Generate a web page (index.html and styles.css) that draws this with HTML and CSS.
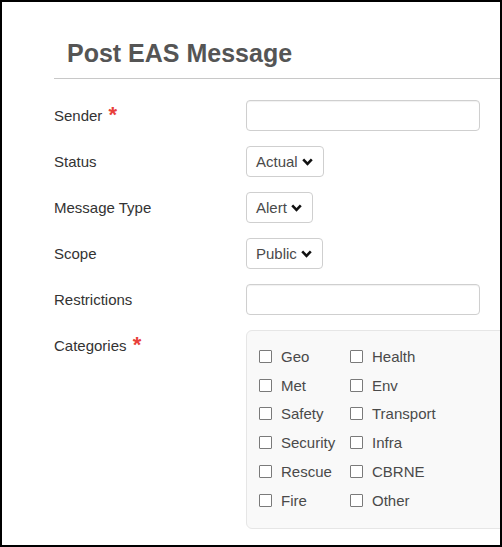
FILE: index.html
```html
<!DOCTYPE html>
<html lang="en">
<head>
<meta charset="utf-8">
<title>Post EAS Message</title>
<link rel="stylesheet" href="styles.css">
</head>
<body>
<div class="frame">
  <div class="panel">
    <h1 class="title">Post EAS Message</h1>
    <div class="rule"></div>
    <form class="form">
      <label class="label">Sender <span class="req">*</span></label>
      <div class="control"><input class="text-input" type="text"></div>

      <label class="label">Status</label>
      <div class="control">
        <div class="select"><span>Actual</span><svg class="chev" width="11" height="8" viewBox="0 0 11 8"><path d="M1.2 1.4 L5.5 5.8 L9.8 1.4" fill="none" stroke="#111" stroke-width="2.6"/></svg></div>
      </div>

      <label class="label">Message Type</label>
      <div class="control">
        <div class="select"><span>Alert</span><svg class="chev" width="11" height="8" viewBox="0 0 11 8"><path d="M1.2 1.4 L5.5 5.8 L9.8 1.4" fill="none" stroke="#111" stroke-width="2.6"/></svg></div>
      </div>

      <label class="label">Scope</label>
      <div class="control">
        <div class="select"><span>Public</span><svg class="chev" width="11" height="8" viewBox="0 0 11 8"><path d="M1.2 1.4 L5.5 5.8 L9.8 1.4" fill="none" stroke="#111" stroke-width="2.6"/></svg></div>
      </div>

      <label class="label">Restrictions</label>
      <div class="control"><input class="text-input" type="text"></div>

      <label class="label">Categories <span class="req">*</span></label>
      <div class="control">
        <div class="cat-box">
          <label class="cat"><input type="checkbox" class="cb"><span>Geo</span></label>
          <label class="cat"><input type="checkbox" class="cb"><span>Health</span></label>
          <label class="cat"><input type="checkbox" class="cb"><span>Met</span></label>
          <label class="cat"><input type="checkbox" class="cb"><span>Env</span></label>
          <label class="cat"><input type="checkbox" class="cb"><span>Safety</span></label>
          <label class="cat"><input type="checkbox" class="cb"><span>Transport</span></label>
          <label class="cat"><input type="checkbox" class="cb"><span>Security</span></label>
          <label class="cat"><input type="checkbox" class="cb"><span>Infra</span></label>
          <label class="cat"><input type="checkbox" class="cb"><span>Rescue</span></label>
          <label class="cat"><input type="checkbox" class="cb"><span>CBRNE</span></label>
          <label class="cat"><input type="checkbox" class="cb"><span>Fire</span></label>
          <label class="cat"><input type="checkbox" class="cb"><span>Other</span></label>
        </div>
      </div>
    </form>
  </div>
</div>
</body>
</html>
```

FILE: styles.css
```css
html, body {
  margin: 0;
  padding: 0;
  background: #fff;
}

body {
  font-family: "Liberation Sans", Arial, sans-serif;
}

.frame {
  width: 502px;
  height: 547px;
  box-sizing: border-box;
  border: 2px solid #000;
  overflow: hidden;
  background: #fff;
}

.panel {
  margin-left: 52px;
  padding-top: 36px;
}

.title {
  margin: 0;
  padding-left: 13px;
  font-size: 25px;
  line-height: 30px;
  font-weight: bold;
  color: #555;
}

.rule {
  margin-top: 10px;
  border-top: 1px solid #c8c8c8;
}

.form {
  margin: 21px 0 0 0;
  display: grid;
  grid-template-columns: 192px 1fr;
  row-gap: 15px;
  align-items: start;
}

.label {
  font-size: 15px;
  line-height: 31px;
  color: #333;
  white-space: nowrap;
}

.req {
  color: #e8403a;
  font-weight: bold;
  font-size: 22px;
  line-height: 0;
  margin-left: 2px;
  position: relative;
  top: 1px;
}

.control {
  display: flex;
  align-items: flex-start;
}

.text-input {
  box-sizing: border-box;
  width: 234px;
  height: 31px;
  margin: 0;
  border: 1px solid #cfcfcf;
  border-radius: 4px;
  box-shadow: inset 0 1px 1px rgba(0, 0, 0, 0.06);
  background: #fff;
  font-family: inherit;
  font-size: 15px;
}

.select {
  box-sizing: border-box;
  height: 31px;
  display: inline-flex;
  align-items: center;
  gap: 4px;
  padding: 0 10px 0 9px;
  border: 1px solid #cfcfcf;
  border-radius: 4px;
  background: #fff;
  font-size: 15px;
  color: #4a4a4a;
}

.chev {
  display: block;
  margin-top: 1px;
}

.cat-box {
  box-sizing: border-box;
  width: 300px;
  height: 199px;
  padding: 11px 0 0 12px;
  border: 1px solid #e6e6e6;
  border-radius: 6px;
  background: #f9f9f9;
  display: grid;
  grid-template-columns: 91px auto;
  grid-auto-rows: 28.8px;
  align-content: start;
  justify-content: start;
}

.cat {
  display: flex;
  align-items: center;
  gap: 9px;
  font-size: 15px;
  color: #4a4a4a;
  white-space: nowrap;
}

.cb {
  appearance: none;
  -webkit-appearance: none;
  margin: 0;
  width: 13px;
  height: 13px;
  box-sizing: border-box;
  border: 1px solid #7a7a7a;
  border-radius: 1px;
  background: #fff;
  flex: none;
}
```
